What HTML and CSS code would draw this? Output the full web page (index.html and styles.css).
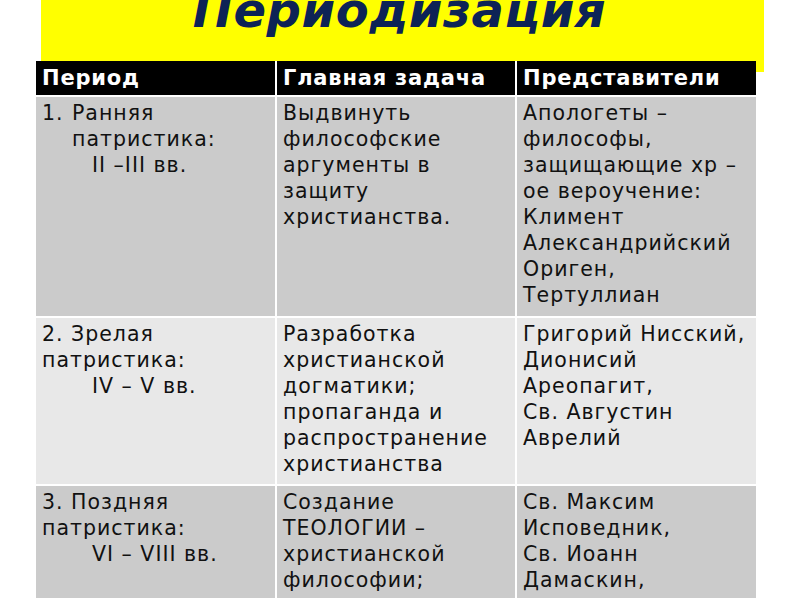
FILE: index.html
```html
<!DOCTYPE html>
<html lang="ru">
<head>
<meta charset="utf-8">
<title>Периодизация патристики</title>
<link rel="stylesheet" href="styles.css">
</head>
<body>
<div class="slide">
  <div class="banner">
    <h1 class="title">Периодизация патристики</h1>
  </div>
  <div class="table">
    <div class="th">Период</div>
    <div class="th">Главная задача</div>
    <div class="th">Представители</div>

    <div class="td dark">
      <div class="num-item"><span class="num">1.</span><span class="num-text">Ранняя патристика:<span class="era era-a">II –III вв.</span></span></div>
    </div>
    <div class="td dark">Выдвинуть философские аргументы в защиту христианства.</div>
    <div class="td dark">Апологеты – философы, защищающие хр – ое вероучение: Климент Александрийский Ориген, Тертуллиан</div>

    <div class="td light">2. Зрелая патристика:<span class="era">IV – V вв.</span></div>
    <div class="td light">Разработка христианской догматики; пропаганда и распространение христианства</div>
    <div class="td light">Григорий Нисский,<br>Дионисий<br>Ареопагит,<br>Св. Августин<br>Аврелий</div>

    <div class="td dark">3. Поздняя патристика:<span class="era">VI – VIII вв.</span></div>
    <div class="td dark">Создание ТЕОЛОГИИ – христианской философии; схоластики</div>
    <div class="td dark">Св. Максим<br>Исповедник,<br>Св. Иоанн<br>Дамаскин,</div>
  </div>
</div>
</body>
</html>
```

FILE: styles.css
```css
html, body {
  margin: 0;
  padding: 0;
  background: #ffffff;
}
body {
  width: 800px;
  height: 600px;
  overflow: hidden;
  font-family: "DejaVu Sans", "Liberation Sans", sans-serif;
  color: #111111;
}
.slide {
  width: 800px;
  height: 600px;
  overflow: hidden;
}
.banner {
  margin-left: 41px;
  width: 723px;
  height: 72px;
  background: #ffff00;
  overflow: hidden;
}
.title {
  margin: -20px auto 0 auto;
  width: 500px;
  font-family: "DejaVu Sans", sans-serif;
  font-weight: bold;
  font-style: italic;
  font-size: 48px;
  line-height: 61px;
  color: #0d2356;
  text-align: center;
  letter-spacing: 0.6px;
  padding-right: 6px;
}
.table {
  position: relative;
  margin: -11px 0 0 36px;
  width: 720px;
  display: grid;
  grid-template-columns: 239px 238px 239px;
  grid-template-rows: 34px 219px 166px 112px;
  gap: 2px;
  background: #ffffff;
}
.th {
  background: #000000;
  color: #ffffff;
  font-weight: bold;
  font-size: 21px;
  line-height: 34px;
  padding: 0 6px;
  letter-spacing: 0.8px;
  white-space: nowrap;
}
.td {
  font-size: 20.5px;
  line-height: 26px;
  padding: 3px 6px 0 6px;
  letter-spacing: 1px;
  overflow: hidden;
}
.dark { background: #cbcbcb; }
.light { background: #e8e8e8; }
.num-item {
  display: flex;
}
.num {
  width: 30px;
  flex: none;
}
.era {
  display: block;
  padding-left: 50px;
}
.num-text .era-a {
  padding-left: 20px;
}
```
